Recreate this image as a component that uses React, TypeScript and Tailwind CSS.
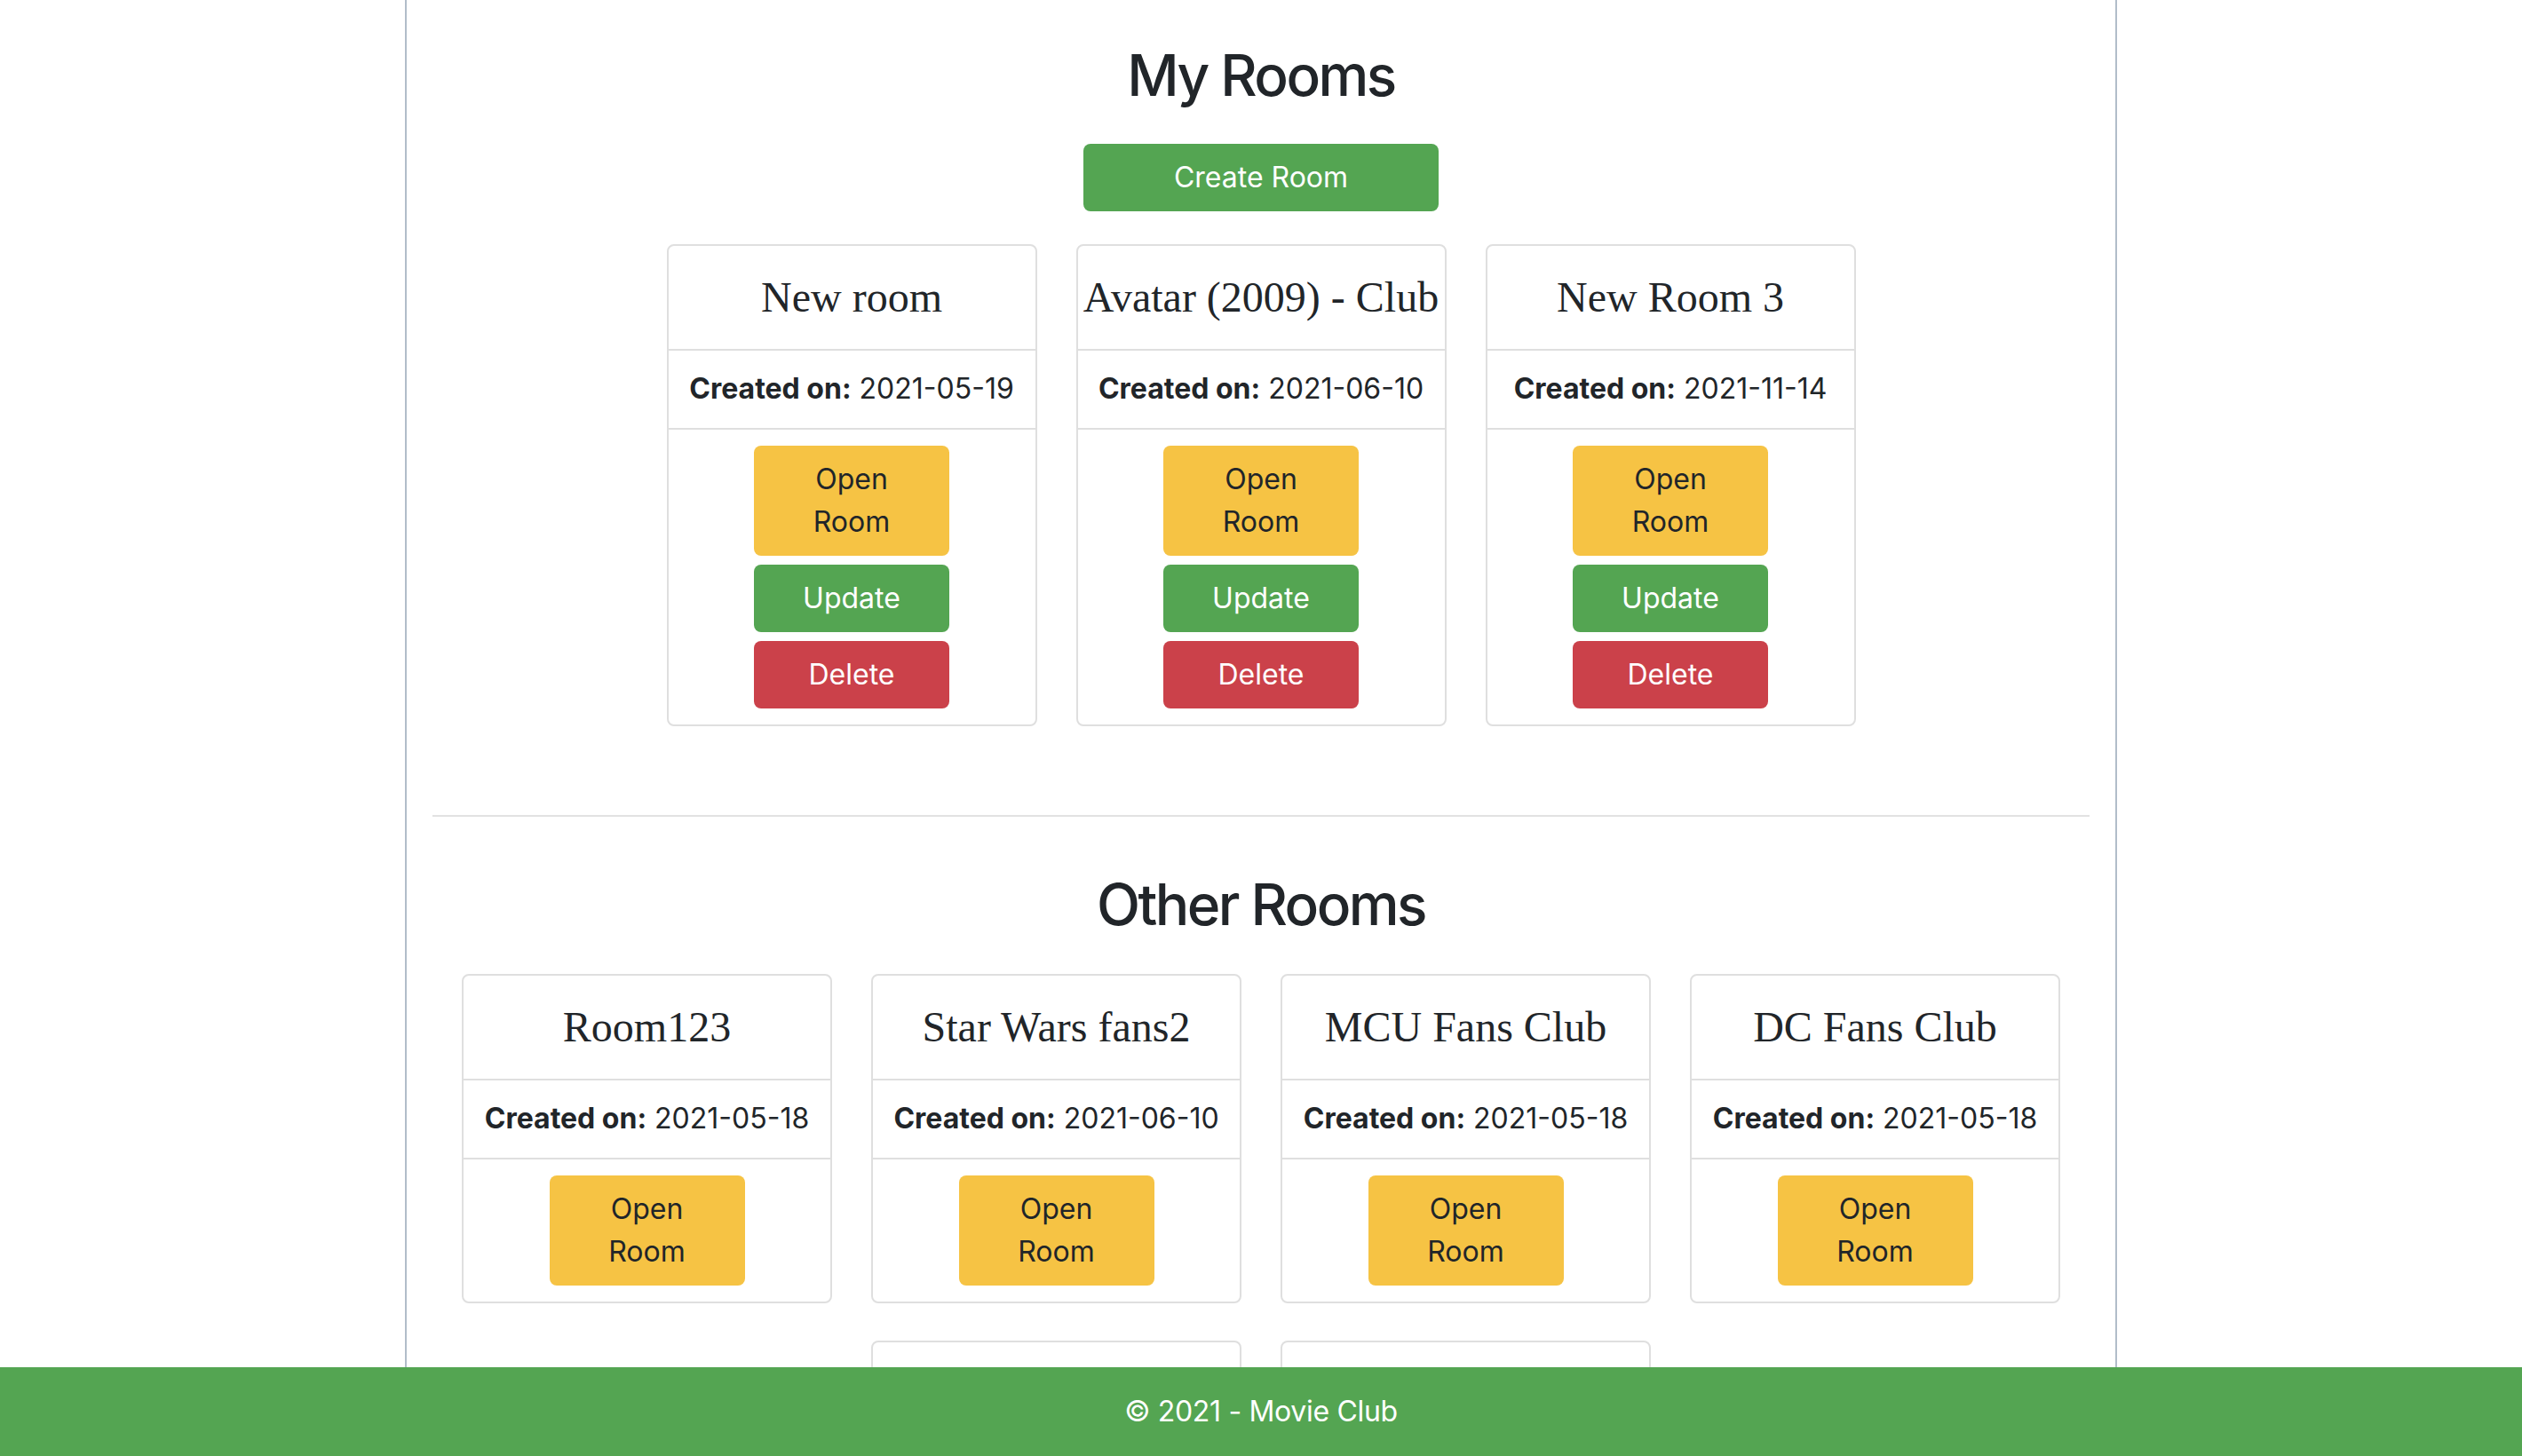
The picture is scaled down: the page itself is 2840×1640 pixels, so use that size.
const myRooms = [
  { name: "New room", created: "2021-05-19" },
  { name: "Avatar (2009) - Club", created: "2021-06-10" },
  { name: "New Room 3", created: "2021-11-14" },
];

const otherRooms = [
  { name: "Room123", created: "2021-05-18" },
  { name: "Star Wars fans2", created: "2021-06-10" },
  { name: "MCU Fans Club", created: "2021-05-18" },
  { name: "DC Fans Club", created: "2021-05-18" },
  { name: "Harry Potter Club", created: "2021-06-12" },
  { name: "Anime Lovers", created: "2021-07-02" },
];

type Room = (typeof myRooms)[number];

function RoomCard({ room, owner }: { room: Room; owner?: boolean }) {
  return (
    <div className="w-[417px] bg-white border-2 border-[#dfdfdf] rounded-[8px] flex flex-col text-[#212529]">
      {/* Title */}
      <div className="h-[118px] flex items-center justify-center border-b-2 border-[#dfdfdf]">
        <h4 className="font-['Liberation_Serif',serif] text-[48px] leading-[1.2] whitespace-nowrap">
          {room.name}
        </h4>
      </div>

      {/* Created date */}
      <div className="h-[89px] flex items-center justify-center border-b-2 border-[#dfdfdf] text-[32px] leading-[48px]">
        <span>
          <b className="font-bold">Created on:</b> {room.created}
        </span>
      </div>

      {/* Buttons */}
      <div className="flex flex-col items-center gap-[10px] pt-[18px] pb-[18px]">
        <button className="w-[220px] px-[40px] py-[14px] rounded-[8px] bg-[#f6c344] text-[#212529] text-[32px] leading-[48px]">
          Open Room
        </button>
        {owner && (
          <>
            <button className="w-[220px] h-[76px] rounded-[8px] bg-[#54a552] text-white text-[32px] leading-[48px]">
              Update
            </button>
            <button className="w-[220px] h-[76px] rounded-[8px] bg-[#cb414a] text-white text-[32px] leading-[48px]">
              Delete
            </button>
          </>
        )}
      </div>
    </div>
  );
}

export default function App() {
  return (
    <div className="h-[1640px] flex flex-col overflow-hidden bg-white font-['Inter',sans-serif] text-[#212529]">
      <main className="flex-1 min-h-0 overflow-hidden">
        <div className="w-[1928px] mx-auto min-h-full border-x-2 border-[#b1bdc9] px-[29px]">
          {/* My Rooms */}
          <h2 className="pt-[47px] text-center text-[64px] leading-[1.2] font-medium tracking-[-0.04em]">
            My Rooms
          </h2>
          <div className="flex justify-center mt-[38px]">
            <button className="w-[400px] h-[76px] rounded-[8px] bg-[#54a552] text-white text-[32px] leading-[48px]">
              Create Room
            </button>
          </div>
          <div className="mt-[37px] flex flex-wrap justify-center gap-x-[44px] gap-y-[42px]">
            {myRooms.map((room) => (
              <RoomCard key={room.name} room={room} owner />
            ))}
          </div>

          <hr className="mt-[100px] border-0 h-[2px] bg-[#e2e2e2]" />

          {/* Other Rooms */}
          <h2 className="mt-[61px] text-center text-[64px] leading-[1.2] font-medium tracking-[-0.04em]">
            Other Rooms
          </h2>
          <div className="mt-[39px] flex flex-wrap justify-center gap-x-[44px] gap-y-[42px]">
            {otherRooms.map((room) => (
              <RoomCard key={room.name} room={room} />
            ))}
          </div>
        </div>
      </main>

      {/* Footer */}
      <footer className="h-[100px] shrink-0 bg-[#54a552] flex items-center justify-center text-white text-[32px] leading-[48px] tracking-[-0.01em]">
        © 2021 - Movie Club
      </footer>
    </div>
  );
}
